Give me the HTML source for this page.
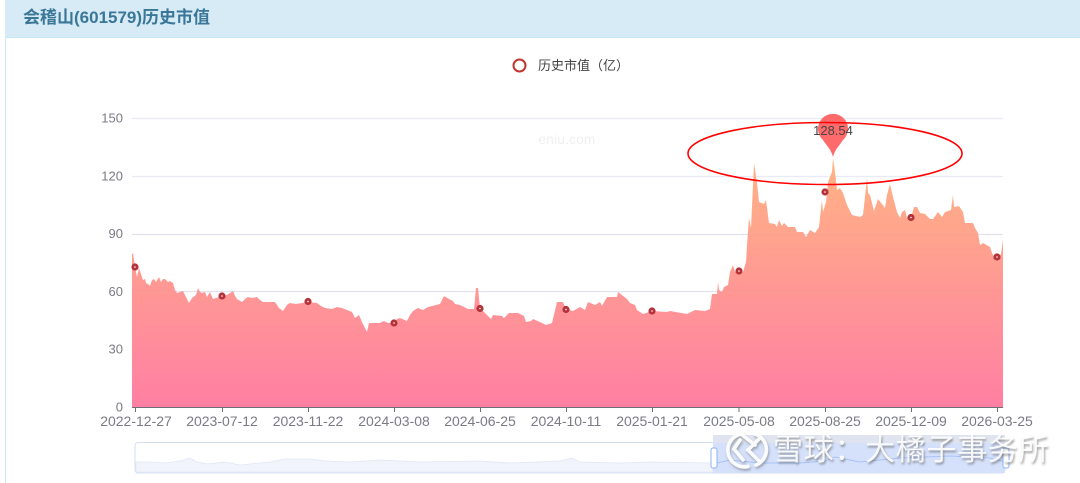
<!DOCTYPE html>
<html lang="zh"><head><meta charset="utf-8"><title>会稽山(601579)历史市值</title>
<style>
html,body{margin:0;padding:0;background:#fff}
body{width:1080px;height:483px;position:relative;overflow:hidden;font-family:"Liberation Sans","Noto Sans CJK SC",sans-serif}
.hd{position:absolute;left:5px;top:0;width:1075px;height:37px;background:#d6ebf5;border-bottom:1px solid #c6e7f5}
.hd span{position:absolute;left:18px;top:8px;font-size:17px;line-height:20px;font-weight:bold;color:#3a7698;white-space:nowrap}
.ln{position:absolute;left:5px;top:38px;width:1px;height:445px;background:#cdeaf6}
svg{position:absolute;left:0;top:0}
.wm{position:absolute;left:773px;top:432px;font-size:30px;line-height:38px;letter-spacing:.7px;color:rgba(255,255,255,.9);text-shadow:1px 2px 2px rgba(80,80,80,.55);white-space:nowrap;font-family:"Liberation Sans","Noto Sans CJK SC",sans-serif}
</style></head><body>
<div class="hd"><span>会稽山(601579)历史市值</span></div><div class="ln"></div>
<svg width="1080" height="483" viewBox="0 0 1080 483" font-family="Liberation Sans, Noto Sans CJK SC, sans-serif">
<defs>
<linearGradient id="g" gradientUnits="userSpaceOnUse" x1="0" y1="150" x2="0" y2="407"><stop offset="0" stop-color="#ffb583"/><stop offset="1" stop-color="#ff7fa3"/></linearGradient>
<filter id="s" x="-20%" y="-20%" width="140%" height="140%"><feDropShadow dx="1" dy="2" stdDeviation="1.2" flood-color="#555" flood-opacity=".5"/></filter>
</defs>
<g stroke="#e8ebf5" stroke-width="1.2">
<path d="M132 118.5H1003M132 176.5H1003M132 234.5H1003M132 291.5H1003M132 349.5H1003"/>
</g>
<text x="567" y="144" text-anchor="middle" font-size="13.5" fill="#efefef" letter-spacing=".3">eniu.com</text>
<path fill="url(#g)" d="M132 407V254L133 253 135 267 137 277 139 268 141 274 143 280 145 279 146 283 148 284 150 286 152 280 154 279 156 282 159 277 161 282 163 279 165 279 168 282 170 281 173 283 175 290 177 293 180 292 183 291 186 297 189 303 192 298 196 295 198 288 200 292 202 293 205 292 207 297 210 292 213 299 216 298 222 296 227 295 233 291 235 296 237 299 242 302 245 299 248 297 252 298 257 297 260 300 263 302 275 302 279 308 283 311 287 305 290 303 296 304 308 302 317 303 321 306 325 308 332 309 337 307 342 308 347 310 352 312 355 318 359 315 362 322 367 332 369 323 380 323 384 321 388 323 393 323 397 319 400 318 407 321 410 315 413 311 418 308 423 310 428 307 440 304 444 296 449 299 453 301 455 304 460 305 468 309 474 309 476 288 478 288 480 308 488 316 491 319 493 315 502 316 504 318 509 313 518 313 524 316 526 322 531 321 533 319 542 323 546 325 552 323 557 302 563 302 566 309 573 311 580 307 585 310 588 302 595 305 600 302 602 306 607 297 617 297 618 292 627 299 630 303 635 305 637 310 643 314 652 311 667 312 670 311 687 314 695 310 705 311 710 309 712 294 717 294 718 282 719 290 722 292 724 287 728 285 730 272 733 265 735 272 743 272 746 262 747 245 749 218 751 228 754 163 757 183 759 202 764 204 766 200 769 223 775 224 777 227 779 220 782 226 784 223 788 227 795 227 797 232 803 232 806 237 810 230 815 233 819 227 822 200 823 212 826 202 828 182 832 172 833 158 835 172 837 190 840 188 843 193 847 205 852 215 860 217 863 215 867 178 868 193 870 195 874 211 878 199 882 204 885 208 887 195 890 184 893 197 897 212 900 218 902 212 905 210 907 218 911 218 914 207 917 207 920 213 925 214 930 219 933 219 938 212 942 217 945 212 951 210 953 195 954 207 959 206 963 212 965 223 973 223 975 228 978 233 980 245 983 243 990 247 992 253 996 261 998 258 1001 254 1003 240V407Z"/>
<path stroke="#c9a0a8" stroke-opacity=".12" stroke-width="1.2" d="M132 234.5H1003M132 291.5H1003M132 349.5H1003" fill="none"/>
<path stroke="#6e7079" stroke-width="1" fill="none" d="M132 407.5H1003M135.5 407V412M222.5 407V412M308.5 407V412M394.5 407V412M480.5 407V412M566.5 407V412M652.5 407V412M739 407V412M825.5 407V412M911.5 407V412M997.5 407V412"/>
<g font-size="13" fill="#7a7b84" text-anchor="end">
<text x="123" y="122.5">150</text><text x="123" y="180.5">120</text><text x="123" y="238">90</text><text x="123" y="296">60</text><text x="123" y="353.5">30</text><text x="123" y="411.5">0</text>
</g>
<g font-size="14" fill="#7a7b84" text-anchor="middle">
<text x="136" y="426">2022-12-27</text><text x="222" y="426">2023-07-12</text><text x="308" y="426">2023-11-22</text><text x="394" y="426">2024-03-08</text><text x="480" y="426">2024-06-25</text><text x="566" y="426">2024-10-11</text><text x="652" y="426">2025-01-21</text><text x="739" y="426">2025-05-08</text><text x="825" y="426">2025-08-25</text><text x="911" y="426">2025-12-09</text><text x="997" y="426">2026-03-25</text>
</g>
<g fill="#fff" stroke="#b5333a" stroke-width="2.8">
<circle cx="135" cy="267" r="2.2"/><circle cx="222" cy="296" r="2.2"/><circle cx="308" cy="301.5" r="2.2"/><circle cx="394" cy="323" r="2.2"/><circle cx="480" cy="308.5" r="2.2"/><circle cx="566" cy="309.5" r="2.2"/><circle cx="652" cy="311" r="2.2"/><circle cx="739" cy="271" r="2.2"/><circle cx="825" cy="192" r="2.2"/><circle cx="911" cy="217.5" r="2.2"/><circle cx="997" cy="257" r="2.2"/>
</g>
<path fill="#ff6b6b" d="M833 157C831 149 826 145 823 140A15 15 0 1 1 843 140C840 145 835 149 833 157Z"/>
<text x="833" y="135" text-anchor="middle" font-size="13" fill="#444">128.54</text>
<ellipse cx="825" cy="153.5" rx="137" ry="31" fill="none" stroke="#f00" stroke-width="1.6"/>
<circle cx="519.5" cy="65.5" r="6" fill="#fff" stroke="#c23531" stroke-width="2"/>
<text x="538" y="70" font-size="13" fill="#444">历史市值（亿）</text>
<rect x="135" y="442.5" width="870" height="30.5" rx="3" fill="#fff" stroke="#d4deef"/>
<path fill="#f2f4fb" stroke="#dfe6f5" stroke-width=".8" d="M136 472V462L150 462 165 463 180 461 190 458 197 462 208 464 225 462 240 465 270 462 285 459 310 459 325 461 350 462 380 460 420 462 480 461 510 463 560 461 572 458 580 462 620 463 650 462 713 463V472Z"/>
<rect x="713" y="435" width="292" height="38" fill="#d5e1fb"/>
<rect x="713" y="435" width="292" height="8" fill="#dfe4f0"/>
<path fill="none" stroke="#a9c3f6" stroke-width="1" d="M713 464 730 460 760 463 800 463 825 461 835 457 860 462 900 458 950 456 990 458 1005 462"/>
<g fill="#fff" stroke="#8fb0f7" stroke-width="1"><rect x="711" y="448" width="6" height="20" rx="2"/><rect x="1003" y="448" width="6" height="20" rx="2"/></g>
<g filter="url(#s)" fill="none" stroke="#fff" stroke-opacity=".92" stroke-width="3.6" stroke-linecap="round">
<path d="M741 434A16.5 16.5 0 0 0 748 466.5M755 434A16.5 16.5 0 0 1 756 465M741 434 755 445M760 438 748 450 760 462M740 440 734 449 743 460"/>
</g>
</svg>
<div class="wm">雪球：大橘子事务所</div>
</body></html>
